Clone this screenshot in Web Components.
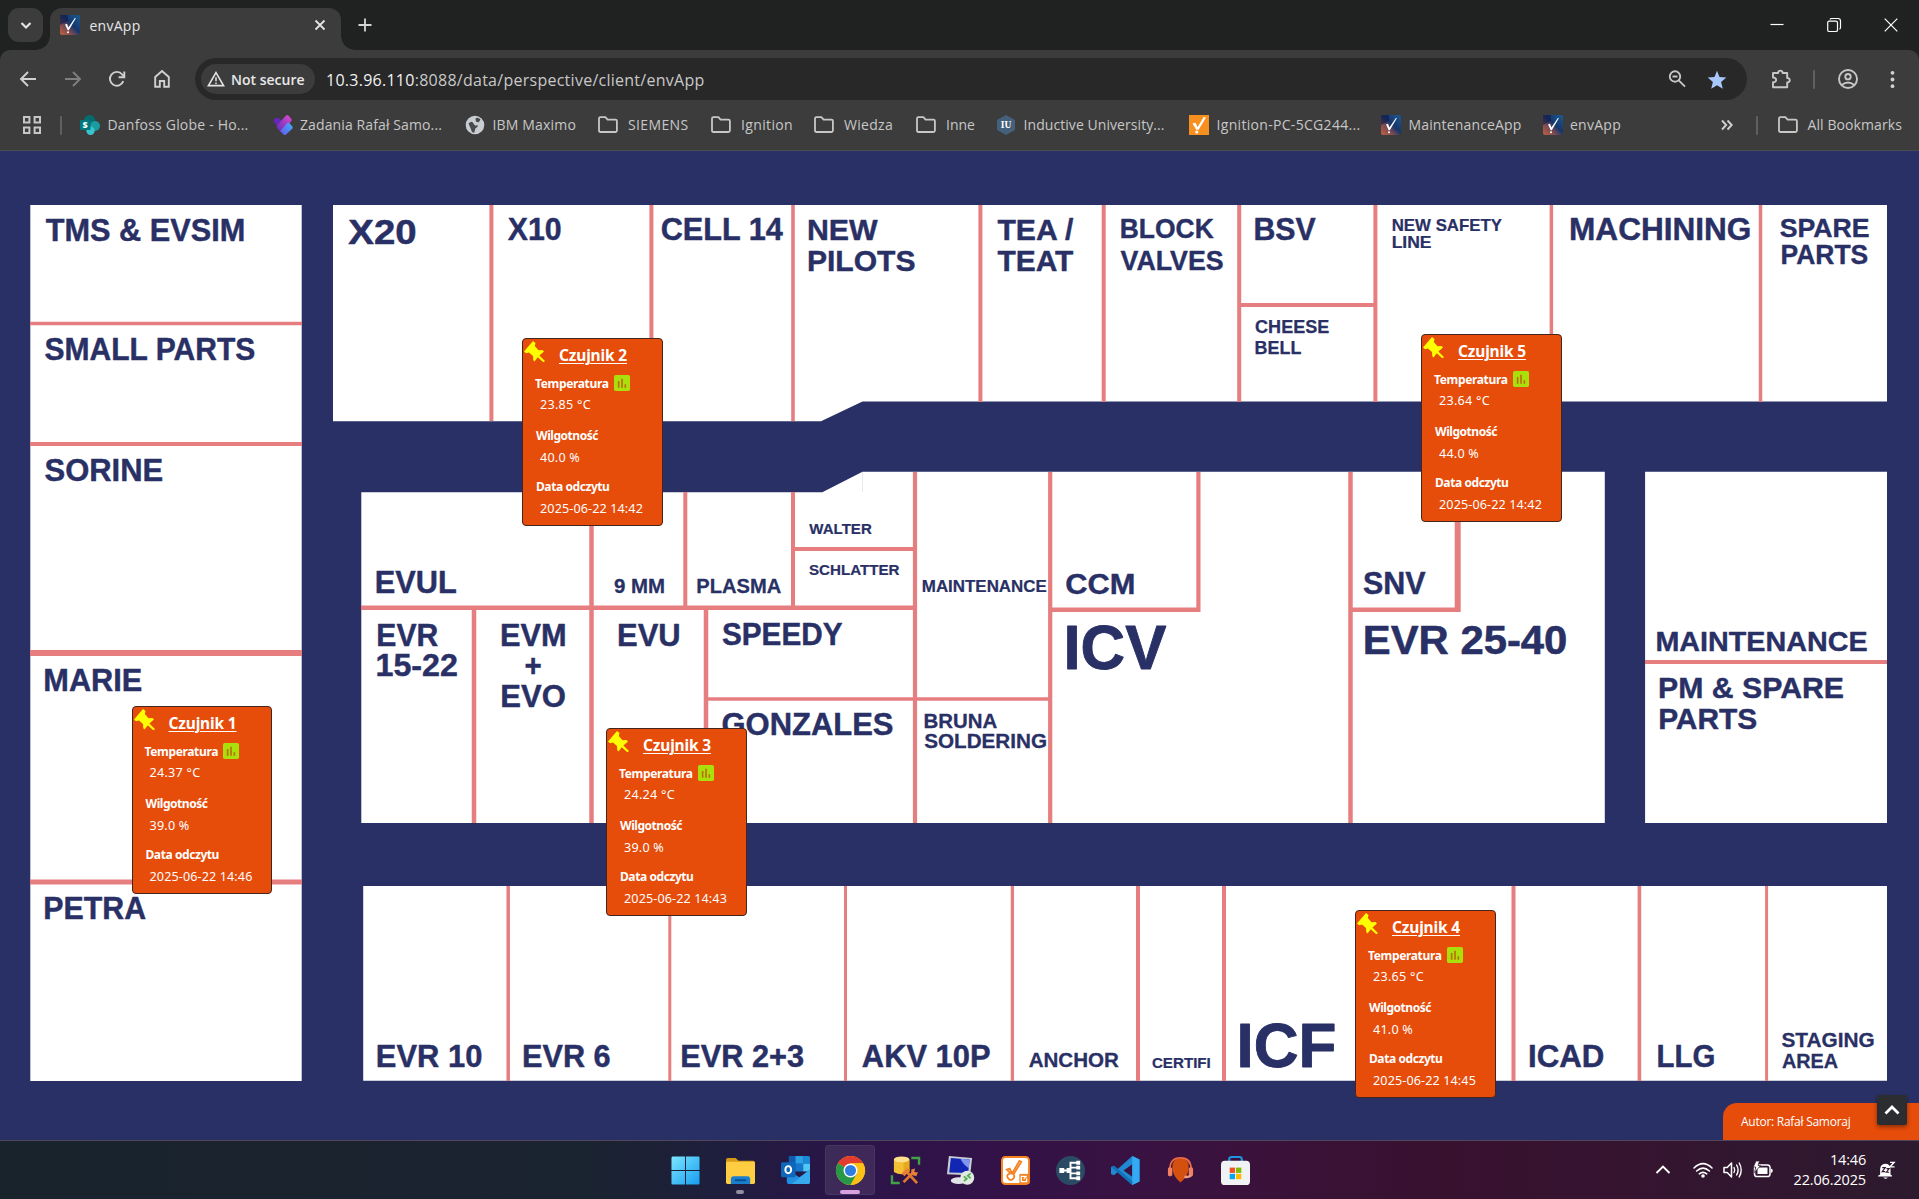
<!DOCTYPE html>
<html lang="pl">
<head>
<meta charset="utf-8">
<title>envApp</title>
<style>
html,body{margin:0;height:100%;overflow:hidden;background:#293065}
body{font-family:"Open Sans","Noto Sans",sans-serif}
</style>
</head>
<body>
<app-desktop></app-desktop>
<script>
const define=(name,css,html,after)=>customElements.define(name,class extends HTMLElement{
  constructor(){super();this.attachShadow({mode:'open'});}
  connectedCallback(){
    this.shadowRoot.innerHTML='<style>:host{display:block;box-sizing:border-box}*{box-sizing:border-box}'+css+'</style>'+(typeof html==='function'?html(this):html);
    if(after)after(this);
  }
});

/* ---------- icons ---------- */
const perspective='<defs><linearGradient id="a" x1="0" y1="1" x2="1" y2="0"><stop offset="0" stop-color="#c4633f"/><stop offset=".32" stop-color="#7b4a52"/><stop offset=".55" stop-color="#15366b"/><stop offset="1" stop-color="#1b5b94"/></linearGradient></defs><rect width="20" height="20" rx="2" fill="url(#a)"/><path d="M0 0h8v6L0 10z" fill="#101a48" opacity=".6"/><path d="M5 9.500 7 8.800l1.400 3.600L15 2.800l.8.500-7 12H7.700z" fill="#fff"/><circle cx="8" cy="17.200" r="1" fill="#fff"/>';
const folder='<path d="M1 3.600Q1 2.200 2.400 2.200h5l2.200 2.400h7.800q1.500 0 1.500 1.400v9.600q0 1.400-1.500 1.400h-15Q1 17 1 15.600z" fill="none" stroke="#c7c7c7" stroke-width="1.800" stroke-linejoin="round"/>';
const icons={
 down:'<path d="M5.500 8l4.500 4.500L14.500 8" fill="none" stroke="#e3e3e3" stroke-width="2.200"/>',
 close:'<path d="M5.500 5.500l9 9m0-9l-9 9" stroke="#e3e3e3" stroke-width="1.800"/>',
 plus:'<path d="M10 3.500v13M3.500 10h13" stroke="#d5d5d5" stroke-width="1.800"/>',
 min:'<path d="M3.500 9.500h13" stroke="#fff" stroke-width="1.200"/>',
 restore:'<rect x="3.700" y="6.200" width="9.800" height="10.300" rx="1.600" fill="none" stroke="#fff" stroke-width="1.200"/><path d="M6 4.500q.4-1 1.500-1h6.500q2.500 0 2.500 2.500v6.500q0 1.200-1 1.700" fill="none" stroke="#fff" stroke-width="1.200"/>',
 wclose:'<path d="M3.700 3.700l12.600 12.600m0-12.600L3.700 16.300" stroke="#fff" stroke-width="1.200"/>',
 back:'<path d="M18 10H3.500M10 3l-7 7 7 7" fill="none" stroke="#d0d0d0" stroke-width="1.900"/>',
 fwd:'<path d="M2 10h14.500M10 3l7 7-7 7" fill="none" stroke="#7f7f7f" stroke-width="1.900"/>',
 reload:'<path d="M16.300 12.200A6.900 6.900 0 1 1 15.200 5.500L17 7.400" fill="none" stroke="#d0d0d0" stroke-width="1.900"/><path d="M17.300 2.500v5.700h-5.700" fill="none" stroke="#d0d0d0" stroke-width="1.900"/>',
 home:'<path d="M3.200 17.800V8L10 2l6.800 6v9.800h-4.600V12H7.800v5.800z" fill="none" stroke="#d0d0d0" stroke-width="1.900"/>',
 warn:'<path d="M10 3 18.400 17.300H1.600z" fill="none" stroke="#e3e3e3" stroke-width="1.800"/><path d="M10 8v4.500M10 13.800v1.800" stroke="#e3e3e3" stroke-width="1.700"/>',
 zoom:'<circle cx="8" cy="7.500" r="5.200" fill="none" stroke="#c7c7c7" stroke-width="1.900"/><path d="M5.500 7.500h5M11.700 11.300l6.300 6.300" stroke="#c7c7c7" stroke-width="1.900"/>',
 star:'<path d="M10 .8l2.500 6.300 6.800.5-5.200 4.400 1.700 6.800L10 15.200 4.200 18.800l1.700-6.800L.7 7.600l6.800-.5z" fill="#a8c7fa"/>',
 ext:'<path d="M2 4h5.200C7 .8 11.800.8 11.600 4h4.600v5c3.400-.2 3.400 4.600 0 4.400v4.900H2v-5c4.200.2 4.200-5 0-4.800z" fill="none" stroke="#c7c7c7" stroke-width="1.900" stroke-linejoin="round"/>',
 user:'<circle cx="10" cy="10" r="9" fill="none" stroke="#c7c7c7" stroke-width="1.900"/><circle cx="10" cy="7.700" r="2.700" fill="none" stroke="#c7c7c7" stroke-width="1.900"/><path d="M3.800 16q6.200-5 12.400 0" fill="none" stroke="#c7c7c7" stroke-width="1.900"/>',
 dots:'<g fill="#d0d0d0"><circle cx="10" cy="3" r="2"/><circle cx="10" cy="10" r="2"/><circle cx="10" cy="17" r="2"/></g>',
 apps:'<path d="M2 2h5.400v5.400H2zM12.600 2H18v5.400h-5.400zM2 12.600h5.400V18H2zM12.600 12.600H18V18h-5.400z" fill="none" stroke="#c7c7c7" stroke-width="2"/>',
 more:'<path d="M5 5.500l4.200 4.500L5 14.500M10.500 5.500l4.200 4.500-4.200 4.500" fill="none" stroke="#d0d0d0" stroke-width="1.900"/>',
 folder,persp:perspective,
 sp:'<circle cx="9.500" cy="5.500" r="5.500" fill="#036c70"/><circle cx="15" cy="11" r="5" fill="#1a9ba1"/><circle cx="10.500" cy="15.800" r="4.200" fill="#37c6d0"/><rect y="5" width="10.500" height="10" rx="1" fill="#03787c"/><text x="5.200" y="13" text-anchor="middle" font-family="Open Sans" font-weight="800" font-size="9" fill="#fff">S</text>',
 planner:'<defs><linearGradient id="p" x1="1" y1="0" x2="0" y2="1"><stop stop-color="#e24bd0"/><stop offset="1" stop-color="#5a2bb5"/></linearGradient><linearGradient id="q" x1="0" y1="1" x2="1" y2="0"><stop stop-color="#6a55f0"/><stop offset="1" stop-color="#3fb2f5"/></linearGradient></defs><path d="M1 4.500q2-2.500 5-1.500l2.500 3-4 5L.8 7q-.8-1 .2-2.500z" fill="#6427b8"/><path d="M13 .5q1.300-1 2.500.3l2.700 3q1 1.200 0 2.400L9 16.500q-1 1-2 0l-3-3.800q-1-1.200 0-2.400z" fill="url(#p)"/><path d="M14.500 8q1-.8 2 .3l2.700 3q1 1.200 0 2.400L13 19.500q-1.300 1-2.500 0L7.300 16z" fill="url(#q)"/>',
 globe:'<circle cx="10" cy="10" r="9.300" fill="#c9ccd1"/><path d="M3.500 8.500q3.500-3.500 5 0t3.800 1.300q1.200 2.200-1.800 3.400l-1.300 4.500q-2.700 0-3.200-3.500zM10.500 3.200q3-1.200 5 1.300l-1.700 2.800-2.800-.6z" fill="#484a4d"/>',
 iu:'<path d="M10 0l9 5v10l-9 5-9-5V5z" fill="#44607a"/><text x="10" y="13.200" text-anchor="middle" font-family="Liberation Serif" font-weight="700" font-size="9.500" fill="#fff">IU</text>',
 ign:'<rect width="20" height="20" fill="#f7901e"/><path d="M3.500 8.500l3-.8L8.600 12 14.800 2l2.200.5-7.400 12.300H7.200z" fill="#fff"/><circle cx="7.800" cy="17" r="1.600" fill="#fff"/>',
 pin:'<path d="M9 0L11.500 2 10.800 5 14.500 9.300 18.500 9 20 10.500 15.400 14.600 20.700 19.800 20.200 21.200 18.700 20.800 13.800 16.200 10.500 20.600 9.300 19.300 9 15 5 11.500 2 12.300 0 10.500z" fill="#ff0"/>',
 chart:'<rect width="20" height="20" rx="2.200" fill="#a9e00c"/><path d="M4.800 7.600h2v8.200h-2zM9 4.600h2v11.200H9zM13.200 11.600h2v4.200h-2z" fill="#bd6b10"/>',
 up:'<path d="M3.500 13.500L10 7l6.500 6.500" fill="none" stroke="#fff" stroke-width="2.800"/>',
 caret:'<path d="M3.500 13L10 6.500l6.500 6.500" fill="none" stroke="#fff" stroke-width="1.900"/>',
 wifi:'<g fill="none" stroke="#fff" stroke-width="1.600" stroke-linecap="round"><path d="M1 8q9-8.600 18 0M3.600 11q6.400-5.800 12.800 0M6.300 13.800q3.700-3 7.400 0"/></g><circle cx="10" cy="16" r="1.800" fill="#fff"/>',
 sound:'<path d="M1 7.500h3.200L8.500 3v14l-4.300-4.500H1z" fill="none" stroke="#fff" stroke-width="1.500" stroke-linejoin="round"/><path d="M11 7.500q1.500 2.500 0 5M13.600 5q3 5 0 10M16.200 3q4 7 0 14" fill="none" stroke="#fff" stroke-width="1.400" stroke-linecap="round"/>',
 batt:'<rect x="1.500" y="5" width="15.500" height="11.500" rx="2.600" fill="none" stroke="#fff" stroke-width="1.500"/><rect x="4.500" y="7.500" width="10" height="6.500" fill="#fff"/><path d="M17.800 8.500q2 .3 2 2.200t-2 2.200z" fill="#fff"/><path d="M3 1l-2.700 6h2.500L1.500 12.500l6-7H5L6.500 1z" fill="#fff" stroke="#32162e" stroke-width=".7"/>',
 bell:'<path d="M3.500 15V8.500Q4 3.500 9 3q5.500 0 6 5.500V15l1.800 1.500v.8H1.200v-.8zM7 18.200h5q-2.500 3-5 0z" fill="#fff"/><path d="M5.800 7.300h3.400l-3.400 4.500h3.400M10.500 8.500h3l-3 4h3" fill="none" stroke="#32162e" stroke-width="1.300"/><path d="M14.500 1.500h4.500l-4.500 5h5" fill="none" stroke="#fff" stroke-width="1.600"/>',
 win:'<defs><linearGradient id="w" x1="0" y1="0" x2="1" y2="1"><stop stop-color="#7be6ff"/><stop offset="1" stop-color="#179df0"/></linearGradient></defs><path d="M1.500.5h13v14H.5v-13zM15.500.500h13q1 0 1 1v13h-14zM.5 15.500h14v14h-13q-1 0-1-1zM15.500 15.500h14v13q0 1-1 1h-13z" fill="url(#w)"/>',
 files:'<path d="M0 4q0-2 2-2h8l3 3h15q2 0 2 2v4H0z" fill="#d69a18"/><rect x="0" y="6" width="30" height="23" rx="1.500" fill="#ffcd42"/><path d="M5 29v-5q0-3 3-3h14q3 0 3 3v5z" fill="#1b7fcf"/><path d="M10 25h10" stroke="#0b4f95" stroke-width="2" stroke-linecap="round"/>',
 outlook:'<path d="M8 1.500Q8 0 9.500 0H28q2 0 2 2v13H8z" fill="#0f5cae"/><path d="M15 0h8v8h-8z" fill="#2ba0e5"/><path d="M23 0h5q2 0 2 2v6h-7z" fill="#1b88d8"/><path d="M15 8h8v8h-8z" fill="#1577cc"/><path d="M23 8h7v8h-7z" fill="#50c6f4"/><path d="M6 14l13 8 11-8v13q0 2-2 2H9q-3 0-3-3z" fill="#1f8fdf"/><path d="M30 14L11 29h17q2 0 2-2z" fill="#37a9ec"/><rect x="0" y="6.500" width="15" height="15.500" rx="1.500" fill="#0f67bb"/><ellipse cx="7.500" cy="14.200" rx="3" ry="3.700" fill="none" stroke="#fff" stroke-width="2"/>',
 chrome:'<circle cx="15" cy="15" r="15" fill="#fbc116"/><path d="M15 15L2 7.500A15 15 0 0 1 28 7.500H15z" fill="#e33b2e"/><path d="M2 7.500A15 15 0 0 0 15 30l6.500-11.300L15 15z" fill="#279847"/><path d="M15 7.500h13a15 15 0 0 1-13 22.500l6.500-11.300z" fill="#fbc116"/><circle cx="15" cy="15" r="7.200" fill="#fff"/><circle cx="15" cy="15" r="5.700" fill="#2f7de1"/>',
 db:'<path d="M3 3.500v13q8 5 16 0v-13z" fill="#f4c033"/><path d="M13 3.500h6v13q-3 2-6 2.300z" fill="#e6a91f"/><ellipse cx="11" cy="3.500" rx="8" ry="3" fill="#ffe08a"/><path d="M21 2h8v7M1 20v8h8" fill="none" stroke="#43a047" stroke-width="2.500"/><path d="M13 27l11-11M27 28L16 16" stroke="#e07830" stroke-width="2.800"/><path d="M11 18l5-5 4 1-6 7zM21 14l4-1-1 3.500 4 .5-2 4-5-1.500z" fill="#e98035"/>',
 rdp:'<path d="M3 0l24 2-2 18-24-1z" fill="#c9ced6"/><path d="M5 2l19.500 1.700-1.600 14L3.300 17z" fill="#1226b4"/><path d="M15 2.900l9.500.8-1 9q-6-4-8.500-9.800z" fill="#7f95f0"/><ellipse cx="13" cy="25.500" rx="8" ry="3.500" fill="#dfe3e8"/><circle cx="22" cy="22.500" r="7.200" fill="#e4e9e4"/><path d="M18.500 21l3 2.500-3 2.500M25.500 18l-3 2.500 3 2.500" fill="none" stroke="#4caf50" stroke-width="1.800"/>',
 designer:'<rect x="1" y="1" width="28" height="28" rx="3.500" fill="#fff" stroke="#f58220" stroke-width="2"/><path d="M6 14l3-1 2.500 5L19 5l2 1-8 13q2 3-1 5t-5-1.500 3-4.500z" fill="none" stroke="#f58220" stroke-width="1.800"/><path d="M19 18.500h10.500V29H19z" fill="#f58220"/><path d="M25 21h-4v5.500h5.500V23M23.500 24l3-3.500" fill="none" stroke="#fff" stroke-width="1.300"/>',
 node:'<circle cx="15" cy="15" r="15" fill="#2b4a63"/><path d="M6 15h9M22 7h-7v16h7M15 12h7M15 18h7" fill="none" stroke="#fff" stroke-width="2"/><path d="M3.500 12.500h5v5h-5zM11 12.500h4v5h-4zM21 5h4v4h-4zM21 10h4v4h-4zM21 16h4v4h-4zM21 21h4v4h-4z" fill="#fff"/>',
 code:'<path d="M22 0l7.500 3.500v23L22 30 7 16.500 3 20l-3-1.500v-7L3 10l4 3.500zM22 8.500L13 15l9 6.500z" fill="#1f8ad2"/><path d="M22 0l7.500 3.500v23L22 30z" fill="#35a9f2"/><path d="M0 11.500L3 10 22 26v4z" fill="#1371b8"/>',
 headset:'<path d="M15 2.500q9 0 8.500 10Q23 21 15 27.500 7 21 6.500 12.500 6 2.500 15 2.500z" fill="#d4500f"/><path d="M4 14Q4 2 15 2t11 12" fill="none" stroke="#e96a45" stroke-width="1.800"/><rect x="2" y="12" width="4.500" height="9" rx="1.500" fill="#f08060"/><rect x="23.500" y="12" width="4.500" height="9" rx="1.500" fill="#f08060"/><path d="M26 20q-3 2.500-7 1.500" fill="none" stroke="#f39a80" stroke-width="2.500"/>',
 store:'<path d="M8.500 7V3.500Q8.500 1 11 1h8q2.500 0 2.500 2.500V7" fill="none" stroke="#1c94e0" stroke-width="2.200"/><rect x="0" y="5" width="30" height="25" rx="4" fill="#f1f2f4"/><path d="M9 12h5.500v5.500H9z" fill="#f25022"/><path d="M15.500 12H21v5.500h-5.500z" fill="#7fba00"/><path d="M9 18.500h5.500V24H9z" fill="#00a4ef"/><path d="M15.500 18.500H21V24h-5.500z" fill="#ffb900"/>'
};
const big=new Set(['win','files','outlook','chrome','db','rdp','designer','node','code','headset','store']);
define('ui-icon',':host{display:block;flex:none;width:var(--s,20px);height:var(--s,20px)}svg{display:block;width:100%;height:100%;overflow:visible}',
  e=>{const n=e.getAttribute('name'),b=big.has(n)?30:20;return `<svg viewBox="0 0 ${b} ${b}">${icons[n]}</svg>`});

/* ---------- browser chrome ---------- */
define('tab-strip',`
:host{display:flex;height:50px;background:#202221;padding:8px 0 0 8px;align-items:flex-start}
.menu{width:35px;height:34px;border-radius:11px;background:#3c3c3c;display:grid;place-items:center;--s:20px}
.tab{position:relative;width:291px;height:42px;margin-left:7px;background:#3c3c3c;border-radius:12px 12px 0 0;display:flex;align-items:center;padding:0 11px 8px 10px;color:#e6e6e6;font-size:14px}
.tab:before,.tab:after{content:"";position:absolute;bottom:0;width:14px;height:14px}
.tab:before{left:-14px;background:radial-gradient(circle at 0 0,transparent 13.500px,#3c3c3c 14px)}
.tab:after{right:-14px;background:radial-gradient(circle at 100% 0,transparent 13.500px,#3c3c3c 14px)}
fit-text{margin-left:9.500px;flex:1}
.new{margin:7px 0 0 14px}
.win{display:flex;gap:37px;margin:7px 18px 0 auto}`,
`<div class="menu"><ui-icon name="down"></ui-icon></div>
<div class="tab"><ui-icon name="persp"></ui-icon><fit-text w="51">envApp</fit-text><ui-icon name="close"></ui-icon></div>
<ui-icon class="new" name="plus"></ui-icon>
<div class="win"><ui-icon name="min"></ui-icon><ui-icon name="restore"></ui-icon><ui-icon name="wclose"></ui-icon></div>`);

define('tool-bar',`
:host{display:flex;height:58px;background:linear-gradient(#202221,#202221) top/100% 12px no-repeat,#3c3c3c;align-items:center}
.bar{display:flex;align-items:center;width:100%;height:58px;background:#3c3c3c;border-radius:10px 10px 0 0;padding-left:18px}
.nav{display:flex;gap:24.700px;width:177px}
.omni{display:flex;align-items:center;width:1552px;height:42px;border-radius:21px;background:#282828;padding:0 20px 0 6px}
.chip{display:flex;align-items:center;gap:6px;width:114px;height:30px;border-radius:15px;background:#3c3c3c;padding-left:6px;color:#e8e8e8;font-weight:600;font-size:14px}
.url{display:flex;margin-left:11px;font-size:16px;color:#c9c9c9;flex:1;padding-top:1px}
.url b{font-weight:400;color:#f1f1f1}
.omni ui-icon+ui-icon{margin-left:20px}
.right{display:flex;align-items:center;padding-left:24px}
.sep{width:2px;height:19px;border-radius:1px;background:#5e6062;margin:0 23px 0 22px}
.right .d{margin-left:25px;--s:19px}`,
`<div class="bar"><div class="nav"><ui-icon name="back"></ui-icon><ui-icon name="fwd"></ui-icon><ui-icon name="reload"></ui-icon><ui-icon name="home"></ui-icon></div>
<div class="omni"><div class="chip"><ui-icon name="warn" style="--s:18px"></ui-icon><fit-text w="73.500">Not secure</fit-text></div>
<div class="url"><fit-text w="378.500"><b>10.3.96.110</b>:8088/data/perspective/client/envApp</fit-text></div>
<ui-icon name="zoom"></ui-icon><ui-icon name="star" style="margin-top:1px"></ui-icon></div>
<div class="right"><ui-icon name="ext"></ui-icon><div class="sep"></div><ui-icon name="user"></ui-icon><ui-icon class="d" name="dots"></ui-icon></div></div>`);

define('book-mark',':host{display:flex;align-items:center;gap:7.500px;height:20px}:host([icon=folder]){gap:10px}fit-text{margin-top:-1px}',
  e=>`<ui-icon name="${e.getAttribute('icon')}"></ui-icon><fit-text w="${e.getAttribute('w')}">${e.textContent}</fit-text>`);

const marks=[[192.500,'sp',141,'Danfoss Globe - Ho...'],[192.500,'planner',142,'Zadania Rafał Samo...'],[133,'globe',83.500,'IBM Maximo'],[113,'folder',60.500,'SIEMENS'],[103,'folder',52,'Ignition'],[102,'folder',49,'Wiedza'],[80,'folder',29,'Inne'],[193,'iu',141,'Inductive University...'],[192,'ign',144,'Ignition-PC-5CG244...'],[161.500,'persp',113,'MaintenanceApp'],[173,'persp',51,'envApp']];
define('bookmarks-bar',`
:host{display:flex;align-items:center;height:43px;background:#3c3c3c;border-bottom:1px solid #4b4c50;color:#c7c7c7;font-size:14px;padding:0 0 8px 22px}
.sep{width:2px;height:19px;border-radius:1px;background:#5e6062}
.items{display:grid;margin-left:18px;grid-template-columns:${marks.map(m=>m[0]+'px').join(' ')}}`,
`<ui-icon name="apps"></ui-icon><div class="sep" style="margin-left:18px"></div>
<div class="items">${marks.map(m=>`<book-mark icon="${m[1]}" w="${m[2]}">${m[3]}</book-mark>`).join('')}</div>
<ui-icon name="more" style="margin-left:1px"></ui-icon><div class="sep" style="margin:0 20px 0 19px"></div><book-mark icon="folder" w="94.500">All Bookmarks</book-mark>`);

/* ---------- floor plan ---------- */
const V=[[491.400,205,421,4],[651.400,205,421,4],[793,205,421,3.600],[980.400,205,402,4],[1103.700,205,402,4],[1239.200,205,402,4],[1375.400,205,402,4],[1551.400,205,402,3.500],[1760.500,205,402,3.500],
[591.500,492,823,4.500],[685.300,492,608,4],[793,492,608,4],[915,472,823,4.200],[1050.200,472,823,4.200],[1198.400,472,612,4.200],[1350.500,472,823,4.500],[1457.700,472,612,6],[474,608,823,4.500],[706,608,823,4.500],
[508.200,886,1081,3.500],[669.800,886,1081,3],[845.500,886,1081,3],[1012.400,886,1081,3.300],[1138,886,1081,4],[1224,886,1081,4],[1513.500,886,1081,4],[1639.400,886,1081,3.600],[1766.600,886,1081,3]];
const H=[[323.500,30,302,3.400],[444,30,302,4],[653,30,302,6],[882,30,302,5],[305,1239,1375,4],[607.700,361,915,4.500],[549,793,915,4],[609.700,1050,1200,4.500],[609.700,1350,1460,4.500],[699,706,1050,3.300],[662,1645,1887,4]];
/* left ink edge, right ink edge, cap top, baseline, label */
const T=[[45.800,243.700,219,240.500,'TMS & EVSIM'],[45,254.500,338.300,359.500,'SMALL PARTS'],[45,162.400,459.300,480.500,'SORINE'],[45,141.500,669.300,690.700,'MARIE'],[45,145.700,898,919.300,'PETRA'],
[348.200,415.500,219,243.700,'X20'],[507.600,560.800,219.300,240.300,'X10'],[661.600,783,219.300,240.300,'CELL 14'],[808.600,878,219.400,240.300,'NEW'],[808.600,914.700,249.900,270.800,'PILOTS'],[997.400,1073.500,219.400,240.300,'TEA /'],[997.400,1073.500,249.900,270.800,'TEAT'],[1121.200,1213.900,218.800,237.500,'BLOCK'],[1120.400,1222.900,251.500,270,'VALVES'],[1255.100,1315.900,219.300,240.300,'BSV'],[1255.500,1328.900,321,333.300,'CHEESE'],[1255.500,1301.200,341.500,353.700,'BELL'],[1392.500,1502.100,218.500,230.500,'NEW SAFETY'],[1392.500,1431.200,235.700,247.700,'LINE'],[1570.800,1749.900,219,240,'MACHINING'],[1780,1868.900,218.300,236.700,'SPARE'],[1782,1867.600,245.200,263.700,'PARTS'],
[809,871.800,523.700,534,'WALTER'],[809,899.600,564.700,575,'SCHLATTER'],[922.600,1046.500,580.500,592,'MAINTENANCE'],[1066.300,1133.900,573,593.800,'CCM'],[1067.200,1166.500,625.500,669,'ICV'],[614.300,664.100,579,592.700,'9 MM'],[697.400,781.200,579,592.700,'PLASMA'],[376.500,456.300,572.300,593.300,'EVUL'],[378,438,624.700,645.700,'EVR'],[377.100,457.100,655,676,'15-22'],[501.600,564.900,624.700,645.700,'EVM'],[525.300,540.800,655,676,'+'],[502,564.900,685.700,706.700,'EVO'],[618.800,679.200,624.700,645.700,'EVU'],[722.400,842.400,624.200,645.200,'SPEEDY'],[722.400,892.700,714.200,735.200,'GONZALES'],[924.500,997.100,714,727.700,'BRUNA'],[924.500,1046.100,734.300,748,'SOLDERING'],[1363.500,1425.900,573,594,'SNV'],[1365.300,1566.100,625.400,653.700,'EVR 25-40'],[1657,1866.800,632.500,651.400,'MAINTENANCE'],[1659.800,1843.200,677.600,698.200,'PM & SPARE'],[1659.800,1756.400,708.200,728.800,'PARTS'],
[377.600,481.600,1046.300,1067.300,'EVR 10'],[523.700,609.800,1046.300,1067.300,'EVR 6'],[682,803.300,1046.300,1067.300,'EVR 2+3'],[862.200,989.800,1046.300,1067.300,'AKV 10P'],[1028.800,1118.800,1053.500,1067.300,'ANCHOR'],[1152.200,1210.200,1057.300,1068,'CERTIFI'],[1240.300,1334.600,1023.700,1067.200,'ICF'],[1529.800,1603.600,1046.300,1067.300,'ICAD'],[1658.200,1714,1046.300,1067.300,'LLG'],[1781.700,1873.800,1033.500,1047,'STAGING'],[1782,1837.900,1054,1067.700,'AREA']];
const pen=document.createElement('canvas').getContext('2d');
const label=([l,r,top,base,s])=>{
  const size=(base-top)/.69;
  pen.font='bold 200px "Liberation Sans"';
  const m=pen.measureText(s),k=(r-l-.6)/(m.actualBoundingBoxLeft+m.actualBoundingBoxRight);
  return `<text x="${(l+.3+m.actualBoundingBoxLeft*k).toFixed(2)}" y="${base}" font-size="${size.toFixed(2)}" stroke-width="${(size*.014).toFixed(2)}" textLength="${(m.width*k).toFixed(2)}" lengthAdjust="spacingAndGlyphs">${s.replace('&','&amp;')}</text>`;
};
define('floor-plan',`:host{position:relative;height:989px;background:#293065;overflow:hidden}
svg{display:block}text{font-family:"Liberation Sans",sans-serif;font-weight:700;fill:#293065;stroke:#293065;stroke-linejoin:round}
.author{position:absolute;right:0;bottom:0;width:196px;height:37px;border-radius:14px 0 0 0;background:#e64c0a;color:#fff;font-size:12px;line-height:34px;padding:2px 0 0 18px}
.up{position:absolute;right:12px;bottom:15px;width:30px;height:30px;border-radius:2px;background:#2b2d31;box-shadow:0 2px 4px #0006;display:grid;place-items:center}`,
`<svg width="1919" height="989" viewBox="0 151 1919 989">
<g fill="#fff"><path d="M30.300 205H301.700v876H30.300zM333 205h1554v196.500H862.500L821 421.300H333zM361.300 492.300h461l40.200-20.600h742.300V823H361.300zM1645.100 471.700H1887V823h-241.900zM363.200 886H1887v194.700H363.200z"/></g>
<path d="M862.500 472v20" stroke="#dfe4ea" stroke-width=".8"/>
<g stroke="#e67e80">${V.map(([x,a,b,w])=>`<path d="M${x} ${a}V${b}" stroke-width="${w}"/>`).join('')}${H.map(([y,a,b,w])=>`<path d="M${a} ${y}H${b}" stroke-width="${w}"/>`).join('')}</g>
${T.map(label).join('')}</svg>
<slot></slot><div class="author"><fit-text w="109.500">Autor: Rafał Samoraj</fit-text></div><div class="up"><ui-icon name="up"></ui-icon></div>`);

define('sensor-card',`
:host{position:absolute;width:140.500px;height:187.500px;border:1px solid #43261d;border-radius:4px;background:#e64c0a;color:#fff;font-family:"Noto Sans","Open Sans",sans-serif;font-size:12px;padding-left:12px}
.pin{position:absolute;left:1px;top:1.500px;--s:20px}
.t{height:35px;line-height:33px;padding-left:24px;font-size:15.500px;font-weight:700}
.l{line-height:20px;font-weight:700;height:22px;display:flex}.l ui-icon{--s:16px;margin:1px 0 0 5px}
.v{line-height:20px;padding-left:5px;height:30px;font-size:12.600px}
`,
e=>{const a=n=>e.getAttribute(n);return `<ui-icon class="pin" name="pin"></ui-icon><div class="t"><fit-text w="68" underline>${a('name')}</fit-text></div>
<div class="l" style="height:21px"><fit-text w="73.500">Temperatura</fit-text><ui-icon name="chart"></ui-icon></div><div class="v" style="height:31px"><fit-text w="51">${a('temp')} °C</fit-text></div>
<div class="l" style="padding-left:1px"><fit-text w="62">Wilgotność</fit-text></div><div class="v" style="height:29px"><fit-text w="40">${a('hum')} %</fit-text></div>
<div class="l" style="padding-left:1px"><fit-text w="73.500">Data odczytu</fit-text></div><div class="v"><fit-text w="103">${a('date')}</fit-text></div>`});

/* ---------- taskbar ---------- */
define('task-bar',`
:host{position:relative;display:flex;height:59px;border-top:1px solid #51465c;background:linear-gradient(90deg,#19232c 0,#1a2330 31%,#1e1f3c 37%,#2b1449 44%,#331248 52%,#3a123f 62%,#38112f 75%,#351430 85%,#2c1a2e 100%);color:#fff}
.apps{display:flex;gap:5px;margin:4px 0 0 660px;width:610px;flex:none}
.app{position:relative;width:50px;height:50px;border-radius:4px;display:grid;place-items:center;--s:29px;flex:none}
.app.on{background:#ffffff17;border:1px solid #ffffff10}
.app i{position:absolute;bottom:1px;left:21px;width:8px;height:4px;border-radius:2px;background:#8f8fa0}
.app.on i{left:14px;bottom:0;width:20px;background:#d9a0e0}
.tray{display:flex;align-items:center;margin-left:383px;height:57px}
.clock{display:flex;flex-direction:column;align-items:flex-end;width:73px;margin:0 11px 0 20px;font-size:14.500px;line-height:20px}`,
`<div class="apps">${['win','files','outlook','chrome','db','rdp','designer','node','code','headset','store'].map(n=>`<div class="app${n==='chrome'?' on':''}"><ui-icon name="${n}"></ui-icon>${n==='files'||n==='chrome'?'<i></i>':''}</div>`).join('')}</div>
<div class="tray"><ui-icon name="caret"></ui-icon><ui-icon name="wifi" style="margin-left:20px"></ui-icon><ui-icon name="sound" style="margin-left:10px"></ui-icon><ui-icon name="batt" style="margin-left:10px"></ui-icon>
<div class="clock"><fit-text w="36">14:46</fit-text><fit-text w="72.500">22.06.2025</fit-text></div><ui-icon name="bell" style="--s:18px"></ui-icon></div>`);

define('app-desktop',':host{width:1919px;height:1199px}',
`<tab-strip></tab-strip><tool-bar></tool-bar><bookmarks-bar></bookmarks-bar>
<floor-plan>
<sensor-card style="left:131.500px;top:555px" name="Czujnik 1" temp="24.37" hum="39.0" date="2025-06-22 14:46"></sensor-card>
<sensor-card style="left:522px;top:187px" name="Czujnik 2" temp="23.85" hum="40.0" date="2025-06-22 14:42"></sensor-card>
<sensor-card style="left:606px;top:577px" name="Czujnik 3" temp="24.24" hum="39.0" date="2025-06-22 14:43"></sensor-card>
<sensor-card style="left:1355px;top:759px" name="Czujnik 4" temp="23.65" hum="41.0" date="2025-06-22 14:45"></sensor-card>
<sensor-card style="left:1421px;top:183px" name="Czujnik 5" temp="23.64" hum="44.0" date="2025-06-22 14:42"></sensor-card>
</floor-plan><task-bar></task-bar>`);

/* Text run whose tracking is adjusted to span a given width. */
define('fit-text',':host{display:block;white-space:nowrap}span{display:inline-block}:host([underline]) span{text-decoration:underline 1.300px;text-underline-offset:2px;text-decoration-skip-ink:auto}','<span><slot></slot></span>',e=>{
  const s=e.shadowRoot.querySelector('span'),w=+e.getAttribute('w'),n=e.textContent.length;
  s.style.letterSpacing=((w-s.getBoundingClientRect().width)/n).toFixed(3)+'px';
});
</script>
</body>
</html>
